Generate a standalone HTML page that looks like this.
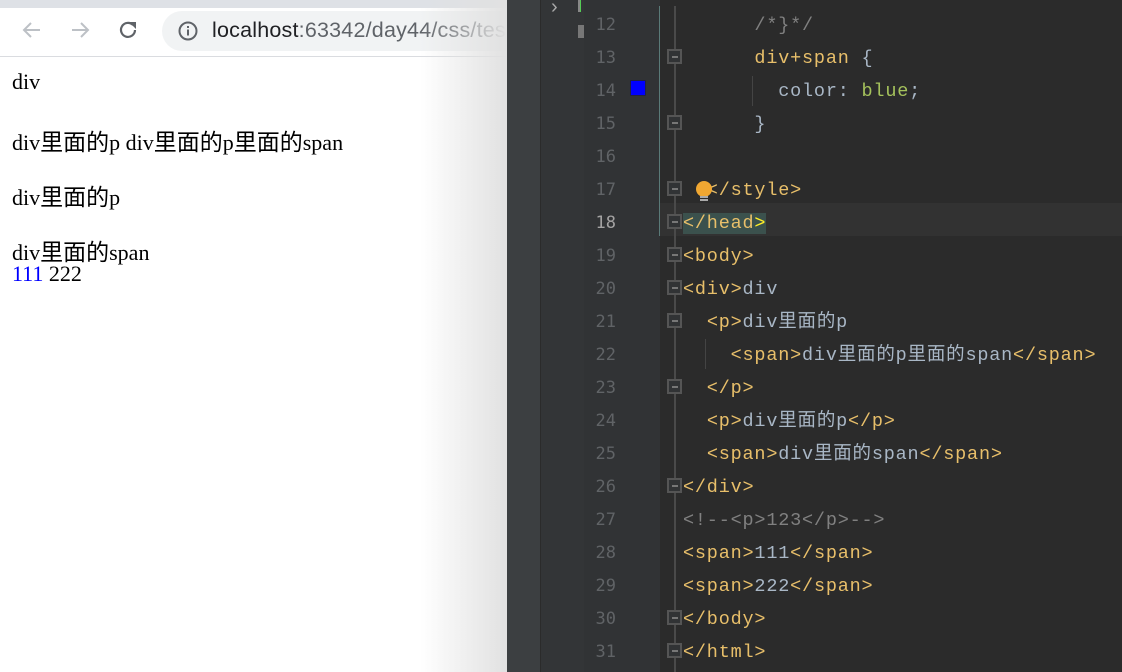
<!DOCTYPE html>
<html><head><meta charset="utf-8"><style>
*{margin:0;padding:0;box-sizing:border-box}
html,body{width:1122px;height:672px;overflow:hidden}
body{position:relative;background:#2b2b2b;font-family:"Liberation Sans",sans-serif}
#br{position:absolute;left:0;top:0;width:507px;height:672px;background:#fff;overflow:hidden}
#tabs{position:absolute;left:0;top:0;width:507px;height:8px;background:#dee1e6}
#tb{position:absolute;left:0;top:8px;width:507px;height:49px;background:#fff;border-bottom:1px solid #dadce0}
#addr{position:absolute;left:162px;top:11px;width:400px;height:40px;border-radius:20px;background:#f1f3f4}
#url{position:absolute;left:212px;top:18px;font-size:21.5px;letter-spacing:0.2px;color:#202124;white-space:nowrap}
#url span{color:#5f6368}
.pg{position:absolute;left:12px;font-family:"Liberation Serif","Noto Sans CJK SC",serif;font-size:22px;color:#000;white-space:nowrap}
.pg b{font-weight:normal;font-family:"Noto Sans CJK SC",sans-serif;font-size:23px}
#fade{position:absolute;left:420px;top:0;width:87px;height:672px;background:linear-gradient(to right,rgba(255,255,255,0),rgba(225,225,225,1))}
#s1{position:absolute;left:507px;top:0;width:33px;height:672px;background:#3c3f41}
#s2{position:absolute;left:540px;top:0;width:44px;height:672px;background:#333537;border-left:1px solid #2b2b2b}
#gut{position:absolute;left:584px;top:0;width:76px;height:672px;background:#313335}
#vl{position:absolute;left:659px;top:-6px;width:1px;height:236px;background:#5a7a78}
#fl{position:absolute;left:674px;top:-6px;width:2px;height:672px;background:#4a4a4a}
.ln{position:absolute;left:584px;width:32px;text-align:right;font-family:"DejaVu Sans Mono",monospace;font-size:17px;color:#606366;height:33px;line-height:33px}
.cd{position:absolute;left:683px;height:33px;line-height:33px;font-family:"Liberation Mono","Noto Sans CJK SC",monospace;font-size:18.5px;letter-spacing:0.8px;white-space:pre;color:#a9b7c6}
.t{color:#e8bf6a}.c{color:#808080}.g{color:#a5c25c}
.fm{position:absolute;left:667px;width:15px;height:15px;border:2px solid #555;background:#313335}
.fm:after{content:"";position:absolute;left:3px;top:5px;width:6px;height:2px;background:#777}
#code{position:absolute;left:0;top:6px;width:1122px;height:666px;overflow:hidden}
</style></head><body>
<div id="br">
<div id="tabs"></div>
<div id="tb"></div>
<div id="addr"></div>
<svg style="position:absolute;left:20px;top:18px" width="24" height="24" viewBox="0 0 24 24"><path d="M20 12H5M11 5l-7 7 7 7" stroke="#bdc1c6" stroke-width="2" fill="none"/></svg>
<svg style="position:absolute;left:68px;top:18px" width="24" height="24" viewBox="0 0 24 24"><path d="M4 12h15M13 5l7 7-7 7" stroke="#bdc1c6" stroke-width="2" fill="none"/></svg>
<svg style="position:absolute;left:116px;top:18px" width="24" height="24" viewBox="0 0 24 24"><path d="M19 12a7 7 0 1 1-2-5" stroke="#5f6368" stroke-width="2.2" fill="none"/><path d="M13 4h7v7z" fill="#5f6368"/></svg>
<svg style="position:absolute;left:177px;top:20px" width="22" height="22" viewBox="0 0 22 22"><circle cx="11" cy="11" r="8.5" stroke="#5f6368" stroke-width="2" fill="none"/><rect x="10" y="9.5" width="2" height="6" fill="#5f6368"/><rect x="10" y="6" width="2" height="2" fill="#5f6368"/></svg>
<div id="url">localhost<span>:63342/day44/css/test.html</span></div>
<div class="pg" style="top:69px">div</div>
<div class="pg" style="top:123px">div<b>里面的</b>p div<b>里面的</b>p<b>里面的</b>span</div>
<div class="pg" style="top:178px">div<b>里面的</b>p</div>
<div class="pg" style="top:233px">div<b>里面的</b>span</div>
<div class="pg" style="top:261px"><span style="color:#00f">111</span> 222</div>
<div id="fade"></div>
</div>
<div id="s1"></div><div id="s2"></div>
<div style="position:absolute;left:551px;top:-4px;color:#aaa;font-size:20px">&#8250;</div>
<div style="position:absolute;left:578px;top:0;width:3px;height:12px;background:#888;border-right:1px solid #5c5"></div>
<div style="position:absolute;left:578px;top:25px;width:6px;height:13px;background:#777"></div>
<div id="gut"></div>
<div id="code">
<div style="position:absolute;left:660px;top:197px;width:462px;height:33px;background:#323232"></div>
<div id="vl"></div><div id="fl"></div>
<div style="position:absolute;left:630px;top:74px;width:16px;height:16px;background:#00f;border:1px solid #224"></div>
<div style="position:absolute;left:752px;top:70px;width:1px;height:30px;background:#444"></div>
<div style="position:absolute;left:705px;top:333px;width:1px;height:30px;background:#444"></div>

<div class="ln" style="top:3px">12</div><div class="ln" style="top:36px">13</div><div class="ln" style="top:69px">14</div><div class="ln" style="top:102px">15</div><div class="ln" style="top:135px">16</div><div class="ln" style="top:168px">17</div><div class="ln" style="top:201px;color:#a4a3a3">18</div><div class="ln" style="top:234px">19</div><div class="ln" style="top:267px">20</div><div class="ln" style="top:300px">21</div><div class="ln" style="top:333px">22</div><div class="ln" style="top:366px">23</div><div class="ln" style="top:399px">24</div><div class="ln" style="top:432px">25</div><div class="ln" style="top:465px">26</div><div class="ln" style="top:498px">27</div><div class="ln" style="top:531px">28</div><div class="ln" style="top:564px">29</div><div class="ln" style="top:597px">30</div><div class="ln" style="top:630px">31</div>

<div class="fm" style="top:43px"></div><div class="fm" style="top:109px"></div><div class="fm" style="top:175px"></div><div class="fm" style="top:208px"></div><div class="fm" style="top:241px"></div><div class="fm" style="top:274px"></div><div class="fm" style="top:307px"></div><div class="fm" style="top:373px"></div><div class="fm" style="top:472px"></div><div class="fm" style="top:604px"></div><div class="fm" style="top:637px"></div>

<div class="cd c" style="top:3px">      /*}*/</div>
<div class="cd" style="top:36px">      <span class="t">div+span</span> {</div>
<div class="cd" style="top:69px">        color: <span class="g">blue</span>;</div>
<div class="cd" style="top:102px">      }</div>
<div class="cd t" style="top:168px">  &lt;/style&gt;</div>
<div style="position:absolute;left:696px;top:175px;width:16px;height:16px;border-radius:50%;background:#f0a732"></div>
<div style="position:absolute;left:700px;top:190px;width:8px;height:5px;border-top:2px solid #aaa;border-bottom:2px solid #aaa"></div>
<div class="cd t" style="top:201px"><span style="background:#3b514d">&lt;/head<span style="color:#ffef28">&gt;</span></span></div>
<div class="cd t" style="top:234px">&lt;body&gt;</div>
<div class="cd" style="top:267px"><span class="t">&lt;div&gt;</span>div</div>
<div class="cd" style="top:300px">  <span class="t">&lt;p&gt;</span>div里面的p</div>
<div class="cd" style="top:333px">    <span class="t">&lt;span&gt;</span>div里面的p里面的span<span class="t">&lt;/span&gt;</span></div>
<div class="cd t" style="top:366px">  &lt;/p&gt;</div>
<div class="cd" style="top:399px">  <span class="t">&lt;p&gt;</span>div里面的p<span class="t">&lt;/p&gt;</span></div>
<div class="cd" style="top:432px">  <span class="t">&lt;span&gt;</span>div里面的span<span class="t">&lt;/span&gt;</span></div>
<div class="cd t" style="top:465px">&lt;/div&gt;</div>
<div class="cd c" style="top:498px">&lt;!--&lt;p&gt;123&lt;/p&gt;--&gt;</div>
<div class="cd" style="top:531px"><span class="t">&lt;span&gt;</span>111<span class="t">&lt;/span&gt;</span></div>
<div class="cd" style="top:564px"><span class="t">&lt;span&gt;</span>222<span class="t">&lt;/span&gt;</span></div>
<div class="cd t" style="top:597px">&lt;/body&gt;</div>
<div class="cd t" style="top:630px">&lt;/html&gt;</div>
</div>
</body></html>
